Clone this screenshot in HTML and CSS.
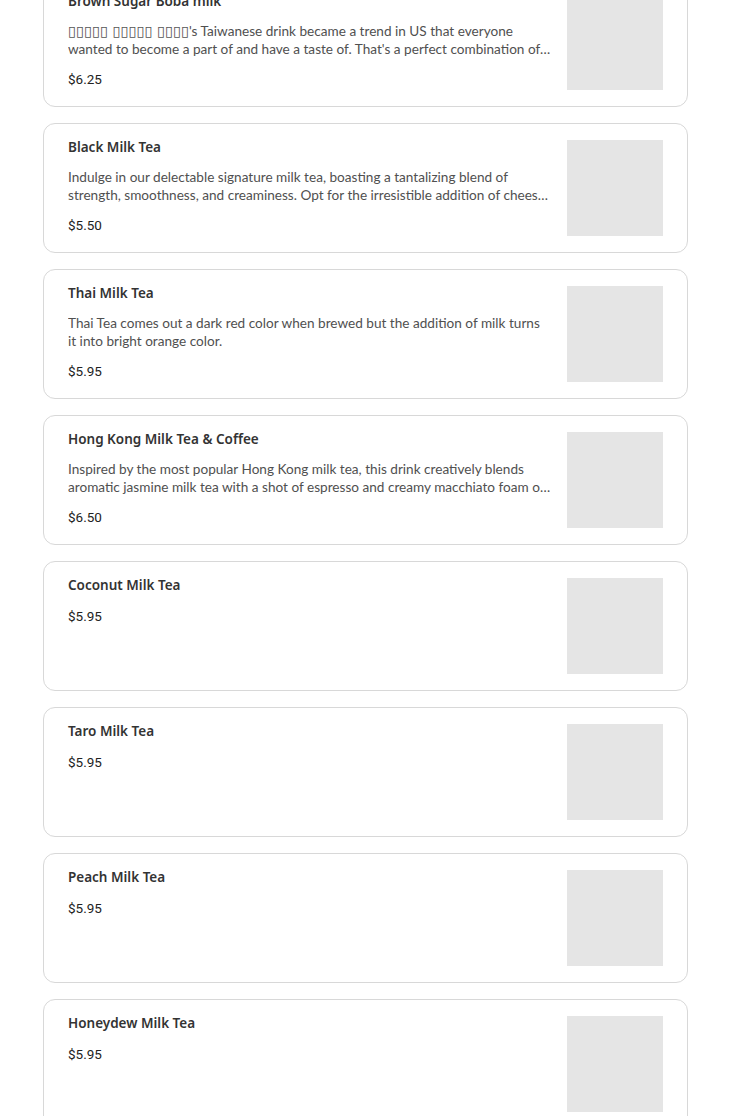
FILE: index.html
```html
<!DOCTYPE html>
<html>
<head>
<meta charset="utf-8">
<link rel="stylesheet" href="styles.css">
</head>
<body>
<div class="menu">
  <div class="card">
    <div class="info">
      <div class="title">Brown Sugar Boba milk</div>
      <div class="desc"><span class="tofu">▯▯▯▯▯ ▯▯▯▯▯ ▯▯▯▯</span>'s Taiwanese drink became a trend in US that everyone wanted to become a part of and have a taste of. That's a perfect combination of brown sugar syrup, fresh milk and chewy boba pearls.</div>
      <div class="price">$6.25</div>
    </div>
    <div class="thumb"></div>
  </div>
  <div class="card">
    <div class="info">
      <div class="title">Black Milk Tea</div>
      <div class="desc">Indulge in our delectable signature milk tea, boasting a tantalizing blend of strength, smoothness, and creaminess. Opt for the irresistible addition of cheese foam for an extra treat.</div>
      <div class="price">$5.50</div>
    </div>
    <div class="thumb"></div>
  </div>
  <div class="card">
    <div class="info">
      <div class="title">Thai Milk Tea</div>
      <div class="desc">Thai Tea comes out a dark red color when brewed but the addition of milk turns it into bright orange color.</div>
      <div class="price">$5.95</div>
    </div>
    <div class="thumb"></div>
  </div>
  <div class="card">
    <div class="info">
      <div class="title">Hong Kong Milk Tea &amp; Coffee</div>
      <div class="desc">Inspired by the most popular Hong Kong milk tea, this drink creatively blends aromatic jasmine milk tea with a shot of espresso and creamy macchiato foam on top.</div>
      <div class="price">$6.50</div>
    </div>
    <div class="thumb"></div>
  </div>
  <div class="card">
    <div class="info">
      <div class="title">Coconut Milk Tea</div>
      <div class="price">$5.95</div>
    </div>
    <div class="thumb"></div>
  </div>
  <div class="card">
    <div class="info">
      <div class="title">Taro Milk Tea</div>
      <div class="price">$5.95</div>
    </div>
    <div class="thumb"></div>
  </div>
  <div class="card">
    <div class="info">
      <div class="title">Peach Milk Tea</div>
      <div class="price">$5.95</div>
    </div>
    <div class="thumb"></div>
  </div>
  <div class="card">
    <div class="info">
      <div class="title">Honeydew Milk Tea</div>
      <div class="price">$5.95</div>
    </div>
    <div class="thumb"></div>
  </div>
</div>
</body>
</html>
```
FILE: styles.css
```css
html, body {
  margin: 0;
  padding: 0;
  background: #ffffff;
  overflow: hidden;
}
.menu {
  display: flex;
  flex-direction: column;
  gap: 16px;
  margin: -23px 42px 0 43px;
}
.card {
  display: flex;
  align-items: flex-start;
  gap: 16px;
  height: 130px;
  box-sizing: border-box;
  padding: 16px 24px;
  border: 1px solid #d8d8d8;
  border-radius: 12px;
  background: #fff;
}
.info {
  flex: 1;
  min-width: 0;
  margin-top: -3px;
  display: flex;
  flex-direction: column;
  gap: 11px;
}
.title {
  font-family: "Noto Sans", sans-serif;
  font-weight: 600;
  font-size: 13.5px;
  line-height: 20px;
  color: #333;
}
.desc {
  font-family: Lato, sans-serif;
  font-size: 13.6px;
  line-height: 18px;
  color: #505050;
  display: -webkit-box;
  -webkit-line-clamp: 2;
  -webkit-box-orient: vertical;
  overflow: hidden;
}
.tofu {
  font-family: "DejaVu Sans", sans-serif;
  font-size: 14.5px;
  line-height: 1;
  color: #555;
}
.price {
  font-family: Roboto, sans-serif;
  font-size: 13.5px;
  line-height: 18px;
  color: #222;
  margin-top: 1px;
}
.thumb {
  width: 96px;
  height: 96px;
  flex: none;
  background: #e5e5e5;
}
```
